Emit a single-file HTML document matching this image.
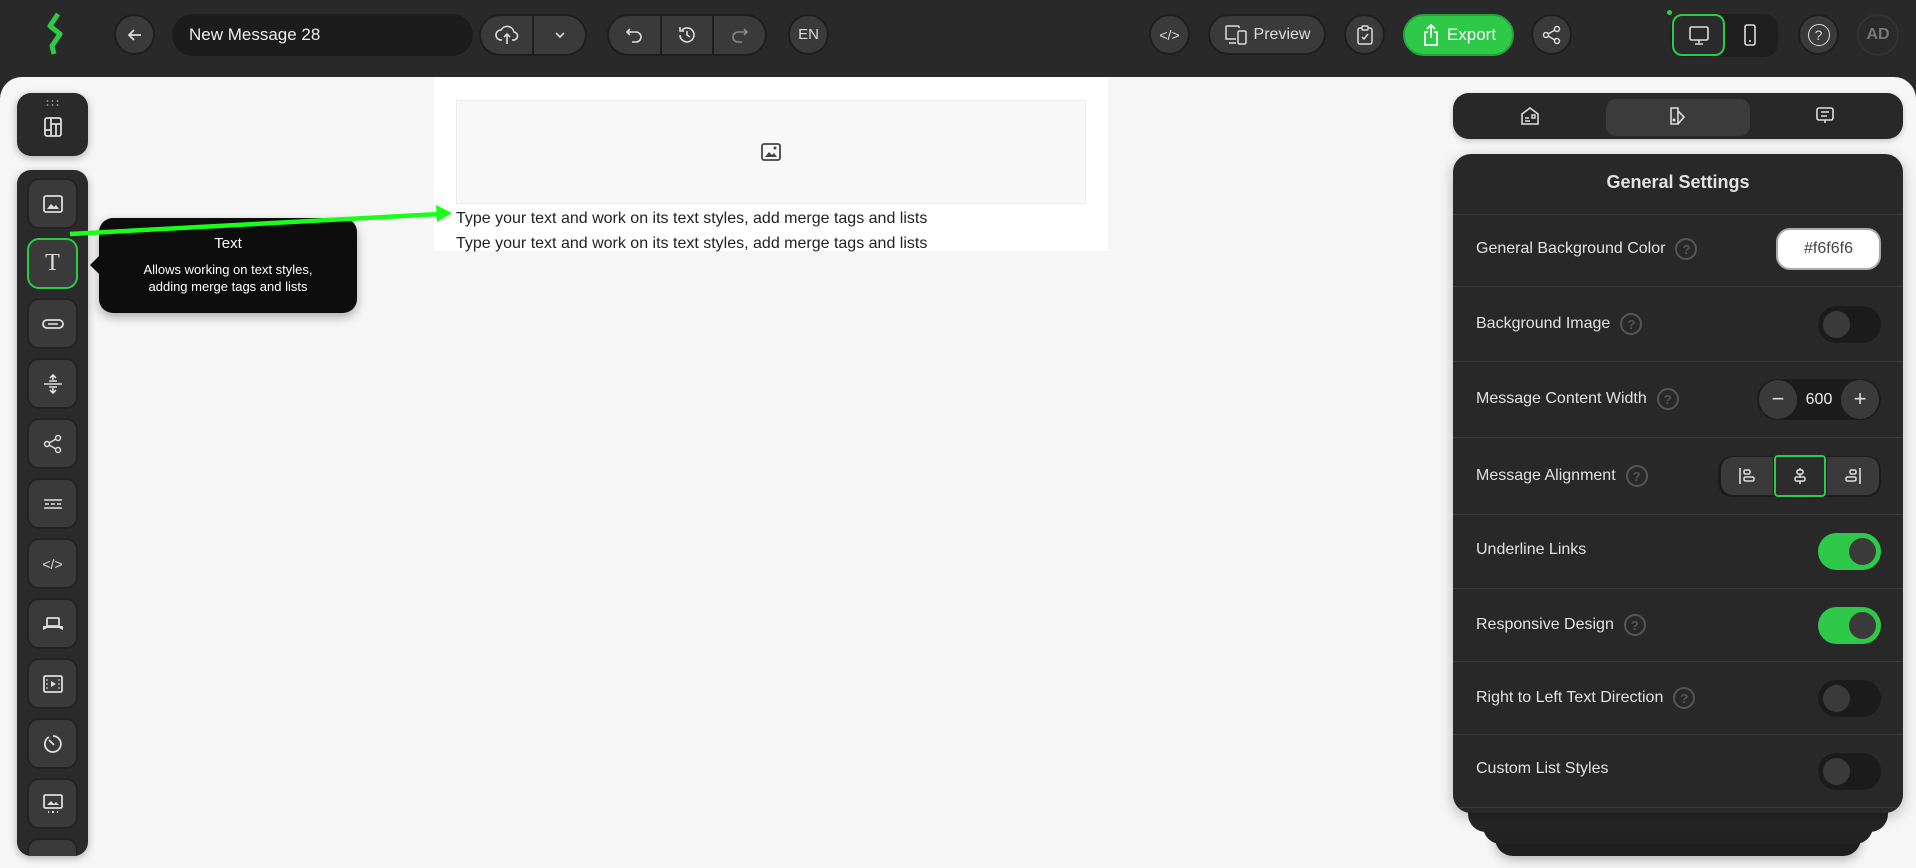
<!DOCTYPE html>
<html><head><meta charset="utf-8">
<style>
*{box-sizing:border-box;margin:0;padding:0}
body{width:1916px;height:868px;overflow:hidden;background:#292929;font-family:"Liberation Sans",sans-serif;position:relative}
.abs{position:absolute}
.btn{position:absolute;background:#3a3a3a;border:2px solid #1e1e1e;border-radius:21px;display:flex;align-items:center;justify-content:center;color:#ddd}
.grp{position:absolute;background:#1e1e1e;border-radius:22px;display:flex;padding:2px;gap:2px}
.grp div{background:#3a3a3a;display:flex;align-items:center;justify-content:center;flex:1}
svg{display:block}
.main{position:absolute;left:0;top:77px;width:1916px;height:791px;background:#f6f6f6;border-radius:22px 22px 0 0}
.side{position:absolute;left:17px;width:71px;background:#2a2a2a;border-radius:14px;box-shadow:0 2px 8px rgba(0,0,0,.3)}
.sb{position:absolute;left:10px;width:51px;height:51px;background:#3a3a3a;border-radius:12px;border:2px solid #232323;display:flex;align-items:center;justify-content:center}
.panel{position:absolute;left:1453px;width:450px;background:#282828;border-radius:18px}
.row{position:absolute;left:0;width:450px;border-top:1px solid #3b3b3b}
.lbl{position:absolute;left:23px;color:#e2e2e2;font-size:16px;display:flex;align-items:center;gap:10px}
.q{width:22px;height:22px;border:2px solid #555;border-radius:50%;color:#555;font-size:13px;font-weight:bold;display:flex;align-items:center;justify-content:center}
.tg{position:absolute;left:365px;width:63px;height:37px;border-radius:19px;background:#1b1b1b}
.tg i{position:absolute;top:5px;left:5px;width:27px;height:27px;border-radius:50%;background:#3a3a3a}
.tg.on{background:#2fc94a}.tg.on i{left:31px;background:#3a3a3a}
</style></head><body>
<!-- top bar -->
<svg class="abs" style="left:44px;top:12px" width="24" height="44" viewBox="0 0 24 44"><path d="M14 2 L6 14 L16 22 L8 34 L10 42" fill="none" stroke="#2fc94a" stroke-width="5" stroke-linejoin="round"/></svg>
<div class="btn" style="left:114px;top:14px;width:41px;height:41px"><svg width="18" height="18" viewBox="0 0 18 18"><path d="M15 9H3M8 4L3 9l5 5" stroke="#ddd" stroke-width="1.8" fill="none"/></svg></div>
<div class="abs" style="left:172px;top:14px;width:301px;height:42px;background:#1c1c1c;border-radius:21px;color:#eee;font-size:17px;line-height:42px;padding-left:17px">New Message 28</div>
<div class="grp" style="left:479px;top:14px;width:108px;height:42px"><div style="border-radius:20px 0 0 20px"><svg width="24" height="22" viewBox="0 0 24 22"><path d="M7 16H6a5 5 0 0 1 0-10 7 7 0 0 1 13 2 4 4 0 0 1-1 8h-1M12 10v10M9 13l3-3 3 3" stroke="#ddd" stroke-width="1.6" fill="none"/></svg></div><div style="border-radius:0 20px 20px 0"><svg width="12" height="8" viewBox="0 0 12 8"><path d="M2 2l4 4 4-4" stroke="#ddd" stroke-width="1.6" fill="none"/></svg></div></div>
<div class="grp" style="left:607px;top:14px;width:160px;height:42px"><div style="border-radius:20px 0 0 20px"><svg width="20" height="20" viewBox="0 0 20 20"><path d="M6 4L3 7l3 3M3 7h9a5 5 0 0 1 0 10H8" stroke="#ddd" stroke-width="1.6" fill="none"/></svg></div><div><svg width="22" height="22" viewBox="0 0 22 22"><path d="M4 11a7 7 0 1 0 2-5M4 3v4h4M11 7v4l3 2" stroke="#ddd" stroke-width="1.6" fill="none"/></svg></div><div style="border-radius:0 20px 20px 0"><svg width="20" height="20" viewBox="0 0 20 20"><path d="M14 4l3 3-3 3M17 7H8a5 5 0 0 0 0 10h4" stroke="#888" stroke-width="1.6" fill="none"/></svg></div></div>
<div class="btn" style="left:788px;top:14px;width:41px;height:41px;font-size:15px">EN</div>
<div class="btn" style="left:1149px;top:14px;width:41px;height:41px;font-size:14px">&lt;/&gt;</div>
<div class="btn" style="left:1208px;top:14px;width:118px;height:41px;font-size:16px;gap:6px"><svg width="24" height="22" viewBox="0 0 24 22"><path d="M15 4V3a1 1 0 0 0-1-1H3a1 1 0 0 0-1 1v12h10M5 19h7" stroke="#ddd" stroke-width="1.5" fill="none"/><rect x="14" y="7" width="8" height="13" rx="1.5" stroke="#ddd" stroke-width="1.5" fill="none"/></svg>Preview</div>
<div class="btn" style="left:1344px;top:14px;width:41px;height:41px"><svg width="18" height="22" viewBox="0 0 18 22"><rect x="2" y="4" width="14" height="16" rx="2" stroke="#ddd" stroke-width="1.5" fill="none"/><rect x="6" y="2" width="6" height="4" rx="1" stroke="#ddd" stroke-width="1.5" fill="#3a3a3a"/><path d="M6 13l2 2 4-5" stroke="#ddd" stroke-width="1.5" fill="none"/></svg></div>
<div class="abs" style="left:1403px;top:14px;width:111px;height:42px;background:#2fc94a;border:2px solid #27a33d;border-radius:21px;color:#fff;font-size:17px;display:flex;align-items:center;justify-content:center;gap:6px"><svg width="20" height="24" viewBox="0 0 20 24"><path d="M7 9H4v13h12V9h-3M10 15V2M6 6l4-4 4 4" stroke="#fff" stroke-width="1.7" fill="none"/></svg>Export</div>
<div class="btn" style="left:1531px;top:14px;width:41px;height:41px"><svg width="20" height="20" viewBox="0 0 20 20"><circle cx="15" cy="4" r="2.5" stroke="#ddd" stroke-width="1.5" fill="none"/><circle cx="4" cy="10" r="2.5" stroke="#ddd" stroke-width="1.5" fill="none"/><circle cx="15" cy="16" r="2.5" stroke="#ddd" stroke-width="1.5" fill="none"/><path d="M6 9l7-4M6 11l7 4" stroke="#ddd" stroke-width="1.5"/></svg></div>
<div class="abs" style="left:1667px;top:10px;width:5px;height:5px;border-radius:50%;background:#2fc94a"></div>
<div class="abs" style="left:1670px;top:14px;width:108px;height:43px;background:#1e1e1e;border-radius:14px"></div>
<div class="abs" style="left:1672px;top:14px;width:53px;height:42px;background:#2a2a2a;border:2px solid #2fc94a;border-radius:10px;display:flex;align-items:center;justify-content:center"><svg width="22" height="22" viewBox="0 0 22 22"><rect x="2" y="3" width="18" height="13" rx="1.5" stroke="#ddd" stroke-width="1.6" fill="none"/><path d="M11 16v3M7 20h8" stroke="#ddd" stroke-width="1.6"/></svg></div>
<svg class="abs" style="left:1743px;top:23px" width="14" height="24" viewBox="0 0 14 24"><rect x="2" y="2" width="10" height="20" rx="2" stroke="#ddd" stroke-width="1.6" fill="none"/><path d="M6 18h2" stroke="#ddd" stroke-width="1.6"/></svg>
<div class="btn" style="left:1798px;top:14px;width:41px;height:41px"><div style="width:22px;height:22px;border:1.7px solid #ddd;border-radius:50%;font-size:14px;display:flex;align-items:center;justify-content:center;background:none">?</div></div>
<div class="abs" style="left:1857px;top:14px;width:42px;height:42px;border-radius:21px;background:#2a2a2a;border:2px solid #333;color:#777;font-weight:bold;font-size:16px;display:flex;align-items:center;justify-content:center">AD</div>

<div class="main"></div>
<!-- canvas -->
<div class="abs" style="left:434px;top:77px;width:674px;height:174px;background:#fff"></div>
<div class="abs" style="left:456px;top:100px;width:630px;height:104px;background:#f8f8f8;border:1px solid #ececec;display:flex;align-items:center;justify-content:center"><svg width="22" height="20" viewBox="0 0 22 20"><rect x="2" y="2" width="18" height="16" rx="2" stroke="#444" stroke-width="1.8" fill="none"/><path d="M5 15l4-5 3 3 2-2 3 4z" fill="#444"/><circle cx="15" cy="6" r="1.5" fill="#444"/></svg></div>
<div class="abs" style="left:456px;top:206px;font-size:16px;line-height:25px;color:#222">Type your text and work on its text styles, add merge tags and lists<br>Type your text and work on its text styles, add merge tags and lists</div>

<!-- left sidebar -->
<div class="side" style="top:93px;height:63px"><div style="position:absolute;left:28px;top:6px;width:15px;height:8px;background-image:radial-gradient(#888 1px,transparent 1.2px);background-size:5px 4px"></div><svg class="abs" style="left:25px;top:22px" width="22" height="24" viewBox="0 0 22 24"><rect x="3" y="3" width="16" height="18" rx="2" stroke="#ddd" stroke-width="1.8" fill="none"/><path d="M9 3v18M9 9h10M14 9v12M3 15h6" stroke="#ddd" stroke-width="1.8"/></svg></div>
<div class="side" style="top:170px;height:686px;overflow:hidden">
<div class="sb" style="top:8px"><svg width="22" height="20" viewBox="0 0 22 20"><rect x="2" y="2" width="18" height="16" rx="2" stroke="#ddd" stroke-width="1.8" fill="none"/><path d="M5 15l4-5 3 3 2-2 3 4z" fill="#ddd"/></svg></div>
<div class="sb" style="top:68px;border-color:#2fc94a;color:#ddd;font-family:'Liberation Serif',serif;font-size:24px">T</div>
<div class="sb" style="top:128px"><svg width="24" height="12" viewBox="0 0 24 12"><rect x="2" y="2" width="20" height="8" rx="4" stroke="#ddd" stroke-width="1.8" fill="none"/><path d="M7 6h10" stroke="#ddd" stroke-width="1.6"/></svg></div>
<div class="sb" style="top:188px"><svg width="22" height="22" viewBox="0 0 22 22"><path d="M2 11h18M7 8h8M7 14h8M11 2v5M8 5l3-3 3 3M11 20v-5M8 17l3 3 3-3" stroke="#ddd" stroke-width="1.6" fill="none"/></svg></div>
<div class="sb" style="top:248px"><svg width="20" height="20" viewBox="0 0 20 20"><circle cx="15" cy="4" r="2.5" stroke="#ddd" stroke-width="1.5" fill="none"/><circle cx="4" cy="10" r="2.5" stroke="#ddd" stroke-width="1.5" fill="none"/><circle cx="15" cy="16" r="2.5" stroke="#ddd" stroke-width="1.5" fill="none"/><path d="M6 9l7-4M6 11l7 4" stroke="#ddd" stroke-width="1.5"/></svg></div>
<div class="sb" style="top:308px"><svg width="22" height="12" viewBox="0 0 22 12"><path d="M2 2h18M2 10h18M3 6h4M9 6h4M15 6h4" stroke="#ddd" stroke-width="1.6"/></svg></div>
<div class="sb" style="top:368px;color:#ddd;font-size:14px">&lt;/&gt;</div>
<div class="sb" style="top:428px"><svg width="24" height="20" viewBox="0 0 24 20"><rect x="6" y="4" width="12" height="8" rx="1" stroke="#ddd" stroke-width="1.8" fill="none"/><path d="M2 12h20v4l-4-2H6l-4 2z" fill="#ddd"/></svg></div>
<div class="sb" style="top:488px"><svg width="22" height="20" viewBox="0 0 22 20"><rect x="2" y="2" width="18" height="16" rx="1.5" stroke="#ddd" stroke-width="1.8" fill="none"/><path d="M9 7v6l5-3z" fill="#ddd"/><path d="M5 5v10M17 5v10" stroke="#ddd" stroke-dasharray="2 2"/></svg></div>
<div class="sb" style="top:548px"><svg width="22" height="22" viewBox="0 0 22 22"><path d="M7 4a8 8 0 1 0 4-1" stroke="#ddd" stroke-width="1.8" fill="none"/><path d="M7 7l5 5" stroke="#ddd" stroke-width="1.8"/></svg></div>
<div class="sb" style="top:608px"><svg width="22" height="22" viewBox="0 0 22 22"><rect x="2" y="2" width="18" height="13" rx="1.5" stroke="#ddd" stroke-width="1.8" fill="none"/><path d="M5 12l4-4 3 3 2-2 3 3z" fill="#ddd"/><path d="M6 19h1M10 19h2M15 19h1" stroke="#ddd" stroke-width="2"/></svg></div>
<div class="sb" style="top:668px"></div>
</div>
<!-- tooltip -->
<div class="abs" style="left:99px;top:218px;width:258px;height:95px;background:#0d0d0d;border-radius:14px;color:#fff;text-align:center;box-shadow:0 4px 10px rgba(0,0,0,.3)">
<div style="font-size:15px;margin-top:17px">Text</div>
<div style="font-size:13px;line-height:17px;margin-top:9px">Allows working on text styles,<br>adding merge tags and lists</div></div>
<div class="abs" style="left:90px;top:256px;width:0;height:0;border-top:9px solid transparent;border-bottom:9px solid transparent;border-right:9px solid #0d0d0d"></div>
<svg class="abs" style="left:0;top:0" width="470" height="260"><path d="M70 234 L440 214" stroke="#1aff1a" stroke-width="4.5"/><path d="M452 213 L436 205 L437 222z" fill="#1aff1a"/></svg>

<!-- right panel -->
<div class="panel" style="top:93px;height:46px;border-radius:16px;box-shadow:0 2px 6px rgba(0,0,0,.2)">
<div class="abs" style="left:153px;top:6px;width:144px;height:37px;background:#3b3b3b;border-radius:10px"></div>
<svg class="abs" style="left:66px;top:12px" width="22" height="22" viewBox="0 0 22 22"><path d="M3 9l8-6 8 6v10H3z" stroke="#ddd" stroke-width="1.6" fill="none"/><path d="M6 13h4M6 16h5M13 10h3v3h-3z" stroke="#ddd" stroke-width="1.4"/></svg>
<svg class="abs" style="left:214px;top:12px" width="22" height="22" viewBox="0 0 22 22"><path d="M4 3h7v16H4zM11 6l6 6-6 7" stroke="#ddd" stroke-width="1.6" fill="none"/><circle cx="7" cy="15" r="1.5" fill="#ddd"/></svg>
<svg class="abs" style="left:361px;top:12px" width="22" height="22" viewBox="0 0 22 22"><rect x="3" y="3" width="16" height="12" rx="2" stroke="#ddd" stroke-width="1.6" fill="none"/><path d="M7 7h8M7 11h6M11 15v3" stroke="#ddd" stroke-width="1.6"/></svg>
</div>
<div class="abs" style="left:1495px;top:800px;width:366px;height:56px;background:#1e1e1e;border-radius:0 0 18px 18px;box-shadow:0 4px 10px rgba(0,0,0,.25)"></div>
<div class="abs" style="left:1483px;top:800px;width:390px;height:44px;background:#222;border-radius:0 0 18px 18px"></div>
<div class="abs" style="left:1468px;top:800px;width:420px;height:32px;background:#252525;border-radius:0 0 18px 18px"></div>
<div class="panel" style="top:154px;height:659px;box-shadow:0 4px 14px rgba(0,0,0,.25);overflow:hidden">
<div class="abs" style="left:0;top:18px;width:450px;text-align:center;color:#e2e2e2;font-size:18px;font-weight:bold">General Settings</div>
<div class="row" style="top:60px;height:72px"><div class="lbl" style="top:23px">General Background Color<span class="q">?</span></div>
<div class="abs" style="left:323px;top:13px;width:105px;height:42px;background:#fff;border:2px solid #aaa;border-radius:14px;color:#444;font-size:16px;text-align:center;line-height:38px">#f6f6f6</div></div>
<div class="row" style="top:132px;height:75px"><div class="lbl" style="top:26px">Background Image<span class="q">?</span></div><div class="tg" style="top:19px"><i></i></div></div>
<div class="row" style="top:207px;height:76px"><div class="lbl" style="top:26px">Message Content Width<span class="q">?</span></div>
<div class="abs" style="left:304px;top:17px;width:124px;height:41px;background:#1c1c1c;border-radius:21px"><div class="abs" style="left:2px;top:1px;width:38px;height:39px;border-radius:50%;background:#3a3a3a;color:#ddd;font-size:22px;text-align:center;line-height:37px">−</div><div class="abs" style="left:42px;top:0;width:40px;color:#eee;font-size:16px;line-height:41px;text-align:center">600</div><div class="abs" style="left:84px;top:1px;width:38px;height:39px;border-radius:50%;background:#3a3a3a;color:#ddd;font-size:22px;text-align:center;line-height:37px">+</div></div></div>
<div class="row" style="top:283px;height:77px"><div class="lbl" style="top:27px">Message Alignment<span class="q">?</span></div>
<div class="abs" style="left:265px;top:18px;width:163px;height:41px;background:#1c1c1c;border-radius:14px"></div>
<div class="abs" style="left:268px;top:19px;width:52px;height:38px;background:#3a3a3a;border-radius:12px 0 0 12px;display:flex;align-items:center;justify-content:center"><svg width="20" height="20" viewBox="0 0 20 20"><path d="M3 2v16" stroke="#ddd" stroke-width="1.6"/><rect x="7" y="4" width="6" height="4" rx="1.5" stroke="#ddd" stroke-width="1.5" fill="none"/><rect x="7" y="11" width="10" height="4" rx="1.5" stroke="#ddd" stroke-width="1.5" fill="none"/></svg></div>
<div class="abs" style="left:321px;top:17px;width:52px;height:42px;background:#2c2c2c;border:2px solid #2fc94a;border-radius:4px;display:flex;align-items:center;justify-content:center"><svg width="20" height="20" viewBox="0 0 20 20"><path d="M10 2v16" stroke="#ddd" stroke-width="1.6"/><rect x="7" y="4" width="6" height="4" rx="1.5" stroke="#ddd" stroke-width="1.5" fill="#2c2c2c"/><rect x="5" y="11" width="10" height="4" rx="1.5" stroke="#ddd" stroke-width="1.5" fill="#2c2c2c"/></svg></div>
<div class="abs" style="left:374px;top:19px;width:52px;height:38px;background:#3a3a3a;border-radius:0 12px 12px 0;display:flex;align-items:center;justify-content:center"><svg width="20" height="20" viewBox="0 0 20 20"><path d="M17 2v16" stroke="#ddd" stroke-width="1.6"/><rect x="7" y="4" width="6" height="4" rx="1.5" stroke="#ddd" stroke-width="1.5" fill="none"/><rect x="3" y="11" width="10" height="4" rx="1.5" stroke="#ddd" stroke-width="1.5" fill="none"/></svg></div></div>
<div class="row" style="top:360px;height:74px"><div class="lbl" style="top:26px">Underline Links</div><div class="tg on" style="top:18px"><i></i></div></div>
<div class="row" style="top:434px;height:73px"><div class="lbl" style="top:25px">Responsive Design<span class="q">?</span></div><div class="tg on" style="top:18px"><i></i></div></div>
<div class="row" style="top:507px;height:73px"><div class="lbl" style="top:25px">Right to Left Text Direction<span class="q">?</span></div><div class="tg" style="top:18px"><i></i></div></div>
<div class="row" style="top:580px;height:73px"><div class="lbl" style="top:25px">Custom List Styles</div><div class="tg" style="top:18px"><i></i></div></div>
<div class="row" style="top:653px;height:10px"></div>
</div>
</body></html>
